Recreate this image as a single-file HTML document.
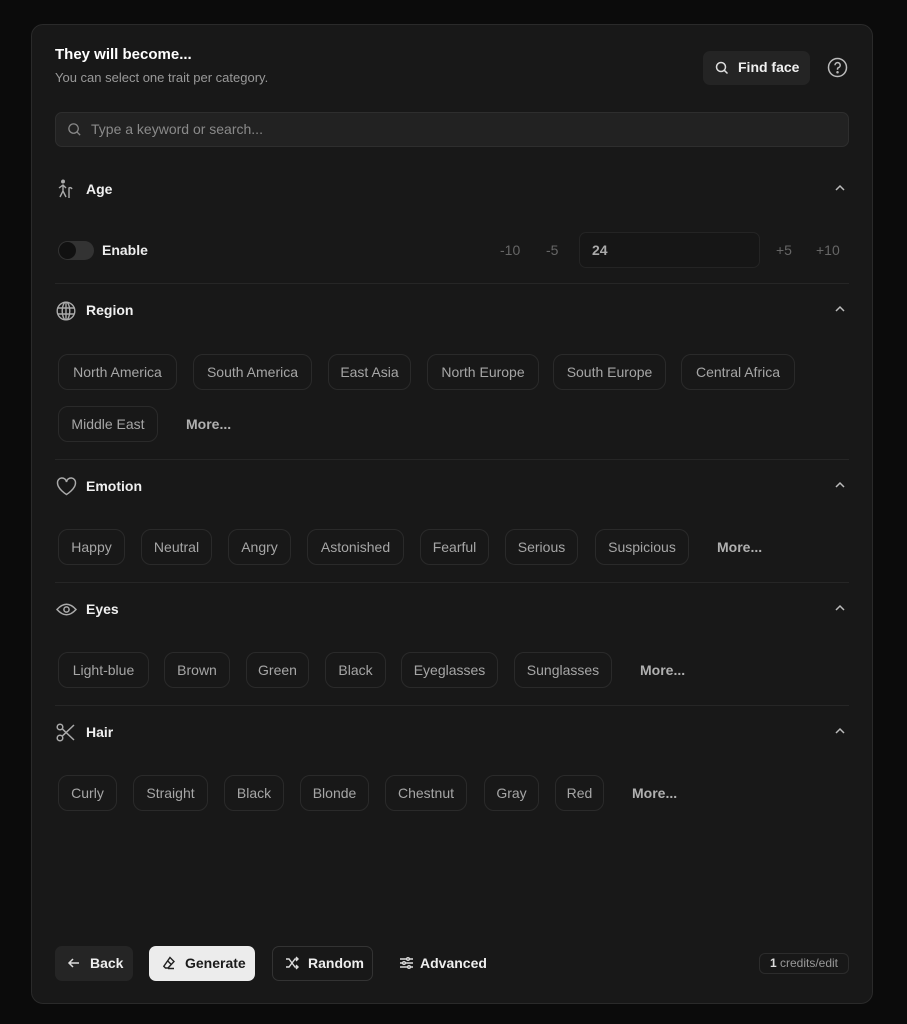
<!DOCTYPE html><html><head><style>
*{box-sizing:border-box;margin:0;padding:0}
body{width:907px;height:1024px;background:#0b0b0b;font-family:"Liberation Sans",sans-serif;position:relative;overflow:hidden;color:#eee}
.card{position:absolute;left:31px;top:24px;width:842px;height:980px;background:#181818;border:1px solid #2a2a2a;border-radius:12px}
.a{position:absolute}
.chip{position:absolute;height:36px;border:1px solid #2a2a2a;border-radius:10px;color:#a6a6a6;font-size:14px;line-height:34px;text-align:center}
.more{position:absolute;color:#b0b0b0;font-size:14px;font-weight:bold;line-height:36px}
.h{position:absolute;left:86px;font-size:14px;font-weight:bold;color:#f0f0f0}
.div{position:absolute;left:55px;width:794px;height:1px;background:#262626}
.car{position:absolute;left:834px}
svg{position:absolute}
.btn{position:absolute;top:946px;height:35px;border-radius:7px;font-size:14px;font-weight:bold;line-height:35px}
</style></head><body>
<div class="card"></div>
<div class="a" style="left:55px;top:46px;font-size:15px;font-weight:bold;color:#fff">They will become...</div>
<div class="a" style="left:55px;top:70px;font-size:13px;color:#999">You can select one trait per category.</div>
<div class="a" style="left:703px;top:51px;width:107px;height:34px;background:#242424;border-radius:7px"></div>
<svg style="left:714px;top:60px" width="16" height="16" viewBox="0 0 16 16" fill="none" stroke="#ddd" stroke-width="1.5"><circle cx="7" cy="7" r="4.5"/><path d="M10.3 10.3L13.5 13.5"/></svg>
<div class="a" style="left:738px;top:59px;font-size:14px;font-weight:bold;color:#f0f0f0">Find face</div>
<svg style="left:827px;top:57px" width="21" height="21" viewBox="0 0 21 21" fill="none" stroke="#bbb" stroke-width="1.5"><circle cx="10.5" cy="10.5" r="9"/><path d="M8 8.2a2.6 2.6 0 1 1 3.6 2.4c-.7.3-1.1.8-1.1 1.6v.6"/><circle cx="10.5" cy="15.3" r=".5" fill="#bbb"/></svg>
<div class="a" style="left:55px;top:112px;width:794px;height:35px;background:#222;border:1px solid #2e2e2e;border-radius:7px"></div>
<svg style="left:67px;top:122px" width="15" height="15" viewBox="0 0 16 16" fill="none" stroke="#888" stroke-width="1.4"><circle cx="7" cy="7" r="5"/><path d="M10.6 10.6L14 14"/></svg>
<div class="a" style="left:91px;top:121px;font-size:14px;color:#8a8a8a">Type a keyword or search...</div>

<!-- Age -->
<svg style="left:56px;top:179px" width="20" height="20" viewBox="0 0 20 20" fill="none" stroke="#aaa" stroke-width="1.4"><circle cx="7" cy="2.5" r="1.3" fill="#aaa"/><path d="M3 9l4-3 3 3M7 6v6l-3 6M7 12l3 6M13 19V9q2-1 3 1"/></svg>
<div class="h" style="top:181px">Age</div>
<svg class="car" style="top:183px" width="12" height="10" viewBox="0 0 12 10" fill="none" stroke="#bbb" stroke-width="1.5"><path d="M2 7l4-4 4 4"/></svg>
<div class="a" style="left:58px;top:241px;width:36px;height:19px;border-radius:10px;background:#333"></div>
<div class="a" style="left:59px;top:242px;width:17px;height:17px;border-radius:50%;background:#111"></div>
<div class="a" style="left:102px;top:242px;font-size:14px;font-weight:bold;color:#eee">Enable</div>
<div class="a" style="left:500px;top:242px;font-size:14px;color:#666">-10</div>
<div class="a" style="left:546px;top:242px;font-size:14px;color:#666">-5</div>
<div class="a" style="left:579px;top:232px;width:181px;height:36px;border:1px solid #242424;border-radius:7px;background:#161616"></div>
<div class="a" style="left:592px;top:242px;font-size:14px;color:#aaa;font-weight:bold">24</div>
<div class="a" style="left:776px;top:242px;font-size:14px;color:#666">+5</div>
<div class="a" style="left:816px;top:242px;font-size:14px;color:#666">+10</div>
<div class="div" style="top:283px"></div>

<!-- Region -->
<svg style="left:56px;top:301px" width="20" height="20" viewBox="0 0 20 20" fill="none" stroke="#aaa" stroke-width="1.4"><circle cx="10" cy="10" r="8.8"/><ellipse cx="10" cy="10" rx="3.8" ry="8.8"/><path d="M1.5 7h17M1.5 13h17M10 1.2v17.6"/></svg>
<div class="h" style="top:302px">Region</div>
<svg class="car" style="top:304px" width="12" height="10" viewBox="0 0 12 10" fill="none" stroke="#bbb" stroke-width="1.5"><path d="M2 7l4-4 4 4"/></svg>
<div class="chip" style="left:58px;top:354px;width:119px">North America</div>
<div class="chip" style="left:193px;top:354px;width:119px">South America</div>
<div class="chip" style="left:328px;top:354px;width:83px">East Asia</div>
<div class="chip" style="left:427px;top:354px;width:112px">North Europe</div>
<div class="chip" style="left:553px;top:354px;width:113px">South Europe</div>
<div class="chip" style="left:681px;top:354px;width:114px">Central Africa</div>
<div class="chip" style="left:58px;top:406px;width:100px">Middle East</div>
<div class="more" style="left:186px;top:406px">More...</div>
<div class="div" style="top:459px"></div>

<!-- Emotion -->
<svg style="left:56px;top:477px" width="21" height="19" viewBox="0 0 21 19" fill="none" stroke="#aaa" stroke-width="1.5"><path d="M10.5 17.5S1.5 12 1.5 6a4.5 4.5 0 0 1 9-1 4.5 4.5 0 0 1 9 1c0 6-9 11.5-9 11.5z"/></svg>
<div class="h" style="top:478px">Emotion</div>
<svg class="car" style="top:480px" width="12" height="10" viewBox="0 0 12 10" fill="none" stroke="#bbb" stroke-width="1.5"><path d="M2 7l4-4 4 4"/></svg>
<div class="chip" style="left:58px;top:529px;width:67px">Happy</div>
<div class="chip" style="left:141px;top:529px;width:71px">Neutral</div>
<div class="chip" style="left:228px;top:529px;width:63px">Angry</div>
<div class="chip" style="left:307px;top:529px;width:97px">Astonished</div>
<div class="chip" style="left:420px;top:529px;width:69px">Fearful</div>
<div class="chip" style="left:505px;top:529px;width:73px">Serious</div>
<div class="chip" style="left:595px;top:529px;width:94px">Suspicious</div>
<div class="more" style="left:717px;top:529px">More...</div>
<div class="div" style="top:582px"></div>

<!-- Eyes -->
<svg style="left:56px;top:602px" width="21" height="15" viewBox="0 0 21 15" fill="none" stroke="#aaa" stroke-width="1.5"><path d="M1 7.5Q10.5-3 20 7.5Q10.5 18 1 7.5z"/><circle cx="10.5" cy="7.5" r="2.6"/></svg>
<div class="h" style="top:601px">Eyes</div>
<svg class="car" style="top:603px" width="12" height="10" viewBox="0 0 12 10" fill="none" stroke="#bbb" stroke-width="1.5"><path d="M2 7l4-4 4 4"/></svg>
<div class="chip" style="left:58px;top:652px;width:91px">Light-blue</div>
<div class="chip" style="left:164px;top:652px;width:66px">Brown</div>
<div class="chip" style="left:246px;top:652px;width:63px">Green</div>
<div class="chip" style="left:325px;top:652px;width:61px">Black</div>
<div class="chip" style="left:401px;top:652px;width:97px">Eyeglasses</div>
<div class="chip" style="left:514px;top:652px;width:98px">Sunglasses</div>
<div class="more" style="left:640px;top:652px">More...</div>
<div class="div" style="top:705px"></div>

<!-- Hair -->
<svg style="left:56px;top:723px" width="20" height="19" viewBox="0 0 20 19" fill="none" stroke="#aaa" stroke-width="1.5"><circle cx="4" cy="4" r="2.8"/><circle cx="4" cy="15" r="2.8"/><path d="M6.2 5.8L18 17M6.2 13.2L18 2"/></svg>
<div class="h" style="top:724px">Hair</div>
<svg class="car" style="top:726px" width="12" height="10" viewBox="0 0 12 10" fill="none" stroke="#bbb" stroke-width="1.5"><path d="M2 7l4-4 4 4"/></svg>
<div class="chip" style="left:58px;top:775px;width:59px">Curly</div>
<div class="chip" style="left:133px;top:775px;width:75px">Straight</div>
<div class="chip" style="left:224px;top:775px;width:60px">Black</div>
<div class="chip" style="left:300px;top:775px;width:69px">Blonde</div>
<div class="chip" style="left:385px;top:775px;width:82px">Chestnut</div>
<div class="chip" style="left:484px;top:775px;width:55px">Gray</div>
<div class="chip" style="left:555px;top:775px;width:49px">Red</div>
<div class="more" style="left:632px;top:775px">More...</div>

<!-- footer -->
<div class="btn" style="left:55px;width:78px;background:#252525;color:#eee;padding-left:35px">Back</div>
<svg style="left:67px;top:956px" width="14" height="14" viewBox="0 0 14 14" fill="none" stroke="#ddd" stroke-width="1.5"><path d="M12 7H2M6 3L2 7l4 4"/></svg>
<div class="btn" style="left:149px;width:106px;background:#ececec;color:#1a1a1a;padding-left:36px">Generate</div>
<svg style="left:162px;top:956px" width="14" height="14" viewBox="0 0 14 14" fill="none" stroke="#222" stroke-width="1.4"><path d="M8 1.5l4 4-6 6.5H3.5L1.8 10.3z M5.3 4.5l4 4M6 12.5h6"/></svg>
<div class="btn" style="left:272px;width:101px;border:1px solid #333;color:#eee;padding-left:35px;line-height:33px">Random</div>
<svg style="left:285px;top:956px" width="15" height="14" viewBox="0 0 15 14" fill="none" stroke="#ddd" stroke-width="1.4"><path d="M1 3h3l6 8h3M1 11h3l6-8h3M11 1l2 2-2 2M11 9l2 2-2 2"/></svg>
<svg style="left:400px;top:956px" width="13" height="14" viewBox="0 0 13 14" fill="none" stroke="#ddd" stroke-width="1.4"><path d="M0 3h13M0 7h13M0 11h13"/><circle cx="8" cy="3" r="1.3" fill="#181818"/><circle cx="4" cy="7" r="1.3" fill="#181818"/><circle cx="9" cy="11" r="1.3" fill="#181818"/></svg>
<div class="btn" style="left:420px;color:#eee">Advanced</div>
<div class="a" style="left:759px;top:953px;width:90px;height:21px;border:1px solid #2c2c2c;border-radius:6px;font-size:12px;line-height:19px;text-align:center;color:#999"><b style="color:#ddd">1</b> credits/edit</div>
</body></html>
